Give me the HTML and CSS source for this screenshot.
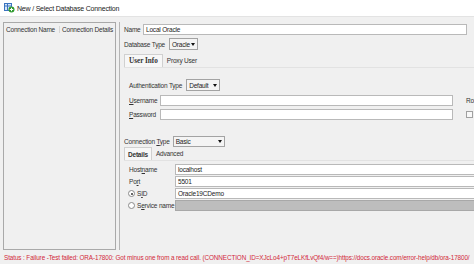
FILE: index.html
```html
<!DOCTYPE html>
<html lang="en">

<head>
    <meta charset="utf-8">
    <meta name="viewport" content="width=device-width, initial-scale=1.0">
    <title>New / Select Database Connection</title>
    <link rel="stylesheet" href="styles.css">
</head>

<body>
    <header class="titlebar">
        <svg class="app-icon" width="11" height="10" viewBox="0 0 11 10">
            <rect x="0.5" y="0.5" width="7" height="7" fill="#d8e6f7" stroke="#3b74c0"/>
            <line x1="1" y1="3" x2="7" y2="3" stroke="#3b74c0"/>
            <line x1="3.5" y1="1" x2="3.5" y2="7" stroke="#3b74c0"/>
            <circle cx="7.5" cy="6.5" r="3" fill="#2f9a2f"/>
            <path d="M7.5 4.8v3.4M5.8 6.5h3.4" stroke="#fff" stroke-width="1"/>
        </svg>
        <span>New / Select Database Connection</span>
    </header>

    <main class="content">
        <section class="list">
            <div class="list-head">
                <span class="col first">Connection Name</span>
                <span class="col">Connection Details</span>
            </div>
        </section>

        <section class="form">
            <div class="row">
                <label class="lbl name-lbl">Name</label>
                <div class="field name-field">Local Oracle</div>
            </div>
            <div class="row gap3">
                <label class="lbl">Database Type</label>
                <div class="select db-select">Oracle <span class="arrow"></span></div>
            </div>

            <nav class="tabs">
                <span class="tab active">User Info</span>
                <span class="tab">Proxy User</span>
            </nav>
            <div class="tab-panel user-panel">
                <div class="row">
                    <label class="lbl">Authentication Type</label>
                    <div class="select auth-select">Default <span class="arrow"></span></div>
                </div>
                <div class="row gap4">
                    <label class="lbl user-lbl"><u>U</u>sername</label>
                    <div class="field user-field"></div>
                    <span class="side">Role</span>
                </div>
                <div class="row gap3">
                    <label class="lbl user-lbl"><u>P</u>assword</label>
                    <div class="field user-field"></div>
                    <span class="side"><span class="check"></span></span>
                </div>
            </div>

            <div class="row conn-row">
                <label class="lbl">Connection <u>T</u>ype</label>
                <div class="select conn-select">Basic <span class="arrow"></span></div>
            </div>

            <nav class="tabs small">
                <span class="tab active">Details</span>
                <span class="tab">Advanced</span>
            </nav>
            <div class="tab-panel details-panel">
                <div class="row">
                    <label class="lbl det-lbl">Host<u>n</u>ame</label>
                    <div class="field det-field">localhost</div>
                </div>
                <div class="row gap1">
                    <label class="lbl det-lbl">Po<u>r</u>t</label>
                    <div class="field det-field">5501</div>
                </div>
                <div class="row gap1">
                    <label class="lbl det-lbl"><span class="radio on"></span>S<u>I</u>D</label>
                    <div class="field det-field">Oracle19CDemo</div>
                </div>
                <div class="row gap1">
                    <label class="lbl det-lbl"><span class="radio"></span>S<u>e</u>rvice name</label>
                    <div class="field det-field disabled"></div>
                </div>
            </div>
        </section>
    </main>

    <p class="status">Status : Failure -Test failed: ORA-17800: Got minus one from a read call. (CONNECTION_ID=XJcLo4+pT7eLKfLvQf4/w==)https://docs.oracle.com/error-help/db/ora-17800/</p>
</body>

</html>
```

FILE: styles.css
```css
* {
    box-sizing: border-box;
}

html,
body {
    margin: 0;
    width: 474px;
    height: 264px;
    overflow: hidden;
    background: #f0f0f0;
    font-family: 'Liberation Sans', Arial, sans-serif;
    font-size: 6.5px;
    letter-spacing: -0.2px;
    color: #333;
}

.titlebar {
    height: 17px;
    background: #fff;
    border-bottom: 1px solid #e3e3e3;
    display: flex;
    align-items: center;
    padding-left: 4px;
    font-size: 7px;
    color: #222;
}

.app-icon {
    margin-right: 2px;
}

.content {
    display: flex;
    padding: 5px 0 0 3px;
    height: 233px;
}

.list {
    width: 113px;
    height: 228px;
    border: 1px solid #a9a9a9;
    background: #f0f0f0;
    flex: none;
}

.list-head {
    display: flex;
    height: 11px;
    align-items: center;
    margin-top: 1px;
    white-space: nowrap;
}

.col {
    padding-left: 2px;
}

.col.first {
    width: 56px;
    border-right: 1px solid #d6d6d6;
}

.form {
    flex: none;
    width: 520px;
    margin-left: 3px;
    border-left: 1px solid #b5b5b5;
    padding: 2px 0 0 4px;
}

.row {
    display: flex;
    align-items: center;
}

.gap1 {
    margin-top: 1px;
}

.gap3 {
    margin-top: 3px;
}

.gap4 {
    margin-top: 4px;
}

.lbl {
    flex: none;
    white-space: nowrap;
}

.name-lbl {
    width: 19px;
}

.field {
    height: 11px;
    background: #fff;
    border: 1px solid #b9b9b9;
    padding-left: 2px;
    display: flex;
    align-items: center;
    color: #222;
}

.name-field {
    width: 324px;
}

.select {
    height: 12px;
    border: 1px solid #a3a3a3;
    background: #f4f4f4;
    display: flex;
    align-items: center;
    justify-content: space-between;
    padding: 0 2px;
    color: #222;
    margin-left: 4px;
}

.db-select {
    width: 29px;
}

.auth-select {
    width: 34px;
}

.conn-select {
    width: 52px;
    height: 11px;
    margin-left: 3px;
}

.arrow {
    width: 0;
    height: 0;
    border-left: 2.5px solid transparent;
    border-right: 2.5px solid transparent;
    border-top: 3px solid #111;
}

.tabs {
    display: flex;
    align-items: flex-end;
    height: 14px;
    margin-top: 3px;
}

.tab {
    padding: 0 4px;
    height: 13px;
    display: flex;
    align-items: center;
}

.tab.active {
    font-family: 'Liberation Serif', serif;
    font-weight: bold;
    font-size: 7.2px;
    letter-spacing: 0;
    background: #f7f7f7;
    border: 1px solid #d0d0d0;
    border-bottom: none;
    padding: 0 4px;
}

.tabs.small .tab.active {
    font-family: 'Liberation Sans', sans-serif;
    font-size: 6.5px;
    letter-spacing: -0.2px;
    padding: 0 3px;
}

.tab-panel {
    border-top: 1px solid #e2e2e2;
}

.user-panel {
    padding: 11px 0 10px 5px;
}

.user-lbl {
    width: 31px;
}

.user-field {
    width: 293px;
}

.side {
    margin-left: 13px;
    display: flex;
    align-items: center;
}

.check {
    width: 7px;
    height: 7px;
    border: 1px solid #a0a0a0;
    background: #f8f8f8;
}

.conn-row {
    margin-top: 6px;
}

.tabs.small {
    height: 13px;
    margin-top: 0;
}

.details-panel {
    padding: 3px 0 0 5px;
}

.det-lbl {
    width: 46px;
}

.det-field {
    width: 320px;
}

.det-field.disabled {
    background: #bdbdbd;
    border-color: #a8a8a8;
}

.radio {
    display: inline-block;
    vertical-align: -1px;
    width: 7px;
    height: 7px;
    border-radius: 50%;
    border: 1px solid #8a8a8a;
    background: #fff;
    margin: 0 2px 0 -1px;
    position: relative;
}

.radio.on::after {
    content: "";
    position: absolute;
    left: 1.5px;
    top: 1.5px;
    width: 2px;
    height: 2px;
    border-radius: 50%;
    background: #333;
}

.status {
    margin: 0;
    padding-left: 4px;
    height: 14px;
    display: flex;
    align-items: center;
    color: #d2283a;
    font-size: 6.35px;
    white-space: nowrap;
    letter-spacing: -0.1px;
}
```
